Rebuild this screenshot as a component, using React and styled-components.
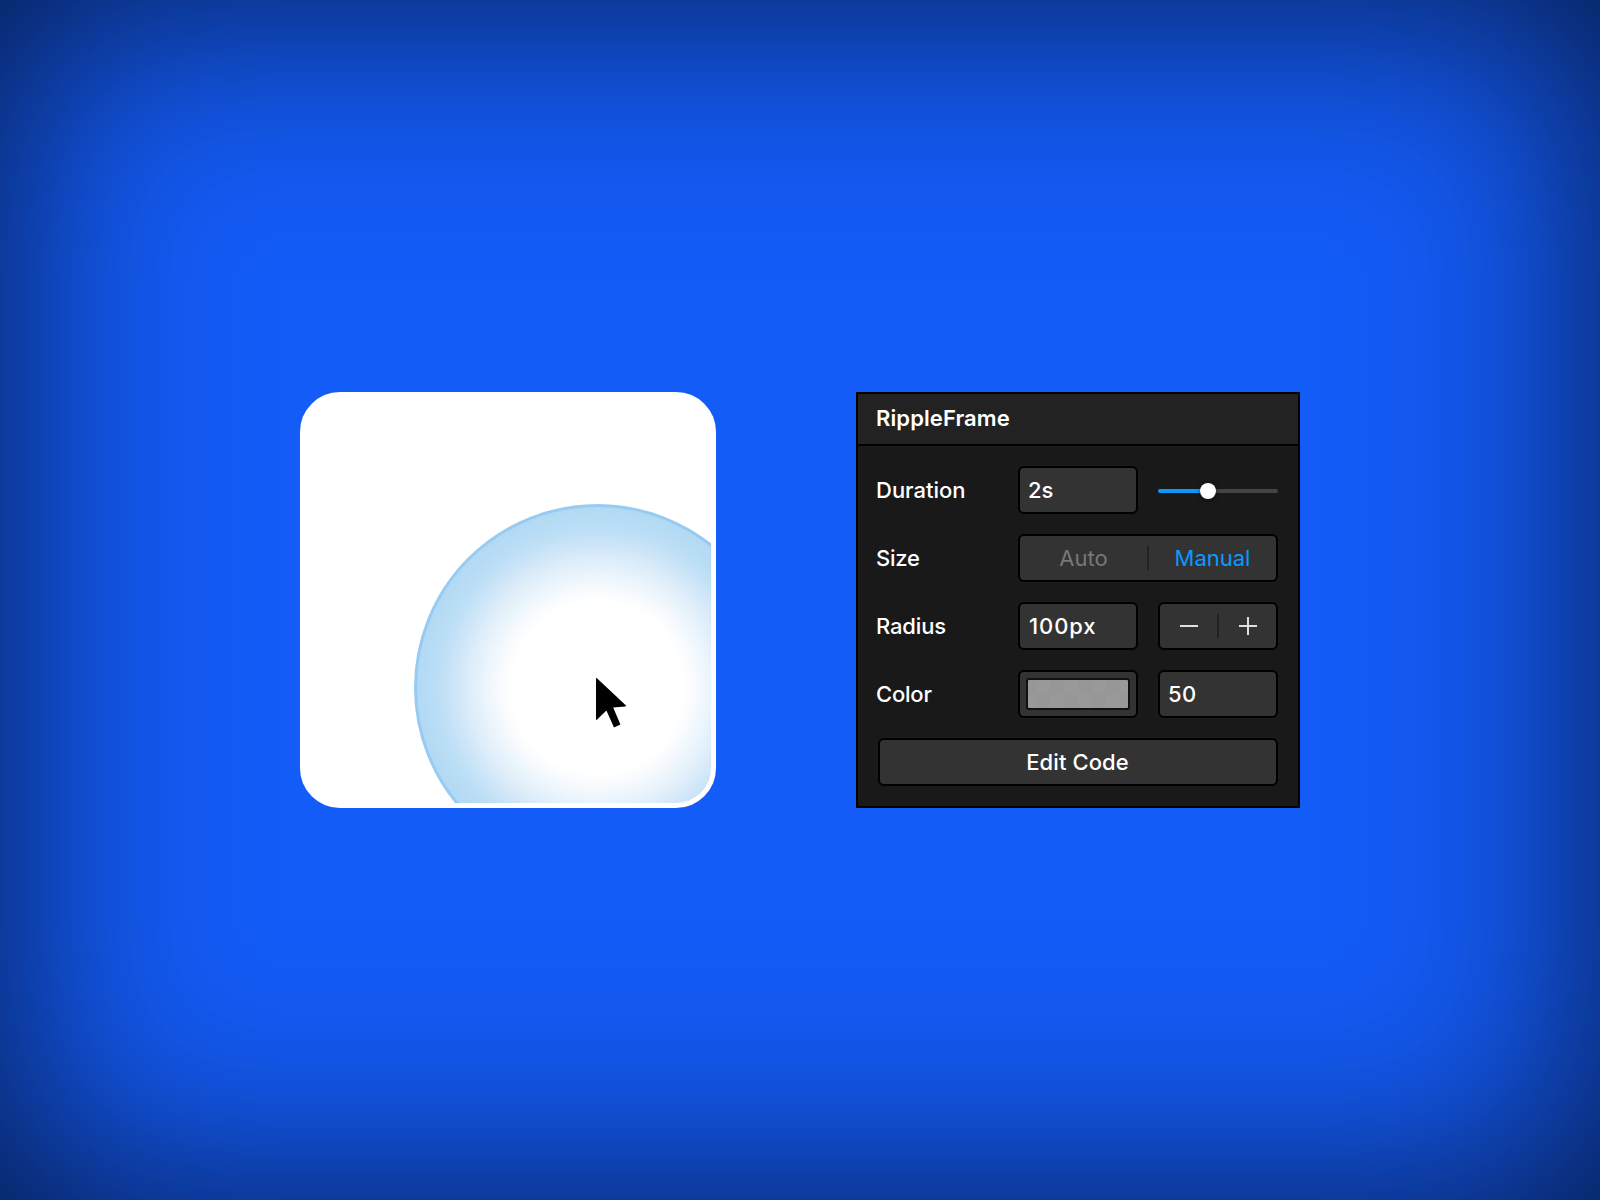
import React from "react";
import styled, { createGlobalStyle } from "styled-components";

const GlobalStyle = createGlobalStyle`
  *, *::before, *::after { box-sizing: border-box; }
  body { margin: 0; background: #145cf7; }
`;

const Stage = styled.main`
  width: 100vw;
  height: 100vh;
  display: flex;
  align-items: center;
  justify-content: center;
  gap: 140px;
  background: #145cf7;
  box-shadow: inset 0 0 232px rgba(0, 0, 0, 0.75);
  font-family: Inter, "Liberation Sans", sans-serif;
  font-size: 22px;
  font-weight: 500;
  color: #fff;
  overflow: hidden;
`;

const Preview = styled.div`
  position: relative;
  width: 416px;
  height: 416px;
  border: 5px solid #fff;
  border-radius: 40px;
  background: #fff;
  overflow: hidden;
`;

const Ripple = styled.div`
  position: absolute;
  left: 109px;
  top: 107px;
  width: 367px;
  height: 367px;
  border: 3px solid #98cbf2;
  border-radius: 50%;
  background: radial-gradient(
    circle closest-side,
    #fff 47%,
    #f8fbfe 54%,
    #ebf5fc 62%,
    #dfeefa 70%,
    #d0e6f8 78%,
    #bfe0f6 86%,
    #b7dcf5 93%,
    #b2d9f4 100%
  );
`;

const Pointer = styled.svg`
  position: absolute;
  left: 291px;
  top: 280px;
`;

const Panel = styled.section`
  width: 444px;
  height: 416px;
  display: flex;
  flex-direction: column;
  border: 2px solid #000;
  background: #191919;
`;

const PanelHeader = styled.header`
  height: 52px;
  flex: none;
  display: flex;
  align-items: center;
  padding: 0 18px 2px;
  border-bottom: 2px solid #000;
  background: #222;
`;

const Title = styled.h2`
  margin: 0;
  font-size: 22px;
  font-weight: 600;
  letter-spacing: 0.1px;
`;

const Rows = styled.div`
  display: flex;
  flex-direction: column;
  gap: 20px;
  padding: 20px 20px 20px 18px;
`;

const Row = styled.div`
  display: grid;
  grid-template-columns: 122px 120px 120px;
  justify-content: space-between;
  height: 48px;
  align-items: center;
`;

const Text = styled.span`
  letter-spacing: ${(p) => p.$tracking || "0"};
  white-space: nowrap;
`;

const Control = styled.div`
  height: 48px;
  display: flex;
  align-items: center;
  grid-column: ${(p) => (p.$wide ? "2 / 4" : "auto")};
  padding: ${(p) => p.$pad || "0"};
  border: 2px solid #000;
  border-radius: 6px;
  background: #333;
`;

const Choice = styled.div`
  flex: 1;
  display: flex;
  align-items: center;
  justify-content: center;
  font-weight: 400;
  color: ${(p) => (p.$active ? "#0a99ff" : "#777")};
`;

const Divider = styled.i`
  flex: none;
  width: 2px;
  height: 24px;
  background: #222;
`;

const Slider = styled.div`
  display: flex;
  align-items: center;
  height: 16px;
  margin-top: 2px;
`;

const Track = styled.div`
  height: 4px;
  flex: ${(p) => p.$grow};
  background: ${(p) => p.$color};
  border-radius: ${(p) => p.$radius};
`;

const Thumb = styled.div`
  flex: none;
  width: 16px;
  height: 16px;
  margin: 0 -8px;
  z-index: 1;
  border-radius: 50%;
  background: #fff;
  box-shadow: 0 1px 4px rgba(0, 0, 0, 0.5);
`;

const Swatch = styled.div`
  width: 104px;
  height: 32px;
  border: 2px solid #111;
  border-radius: 3px;
  background: repeating-conic-gradient(#979797 0 25%, #999 0 50%) 8px 0 / 28px 28px;
`;

const EditButton = styled.button`
  height: 48px;
  margin: 0 0 0 2px;
  padding: 0 1px 0 0;
  border: 2px solid #000;
  border-radius: 6px;
  background: #333;
  color: #fff;
  font: inherit;
`;

function Stepper() {
  return (
    <Control>
      <Choice>
        <svg width="18" height="18" viewBox="0 0 18 18">
          <path d="M0 9H18" stroke="#e0e0e0" strokeWidth="2" />
        </svg>
      </Choice>
      <Divider />
      <Choice>
        <svg width="18" height="18" viewBox="0 0 18 18">
          <path d="M0 9H18M9 0V18" stroke="#e0e0e0" strokeWidth="2" />
        </svg>
      </Choice>
    </Control>
  );
}

export default function App() {
  return (
    <>
      <GlobalStyle />
      <Stage>
        <Preview>
          <Ripple />
          <Pointer width="32" height="52" viewBox="0 0 32 52">
            <path d="M0.7 1 30 28.6 29.6 29.4 17.2 30.6 24.4 47.6 18 50.4 10.4 33.6 0.7 43 0 42.6V1.3Z" fill="#000" />
          </Pointer>
        </Preview>
        <Panel>
          <PanelHeader>
            <Title>RippleFrame</Title>
          </PanelHeader>
          <Rows>
            <Row>
              <Text>Duration</Text>
              <Control $pad="0 8px">
                <Text>2s</Text>
              </Control>
              <Slider>
                <Track $grow="50" $color="#0a99ff" $radius="2px 0 0 2px" />
                <Thumb />
                <Track $grow="70" $color="#444" $radius="0 2px 2px 0" />
              </Slider>
            </Row>
            <Row>
              <Text $tracking="-0.2px">Size</Text>
              <Control $wide>
                <Choice>
                  <Text>Auto</Text>
                </Choice>
                <Divider />
                <Choice $active>
                  <Text>Manual</Text>
                </Choice>
              </Control>
            </Row>
            <Row>
              <Text $tracking="-0.15px">Radius</Text>
              <Control $pad="0 9px">
                <Text $tracking="0.9px">100px</Text>
              </Control>
              <Stepper />
            </Row>
            <Row>
              <Text $tracking="-0.2px">Color</Text>
              <Control $pad="0 6px">
                <Swatch />
              </Control>
              <Control $pad="0 8px">
                <Text $tracking="0.3px">50</Text>
              </Control>
            </Row>
            <EditButton>
              <Text $tracking="0.1px">Edit Code</Text>
            </EditButton>
          </Rows>
        </Panel>
      </Stage>
    </>
  );
}
